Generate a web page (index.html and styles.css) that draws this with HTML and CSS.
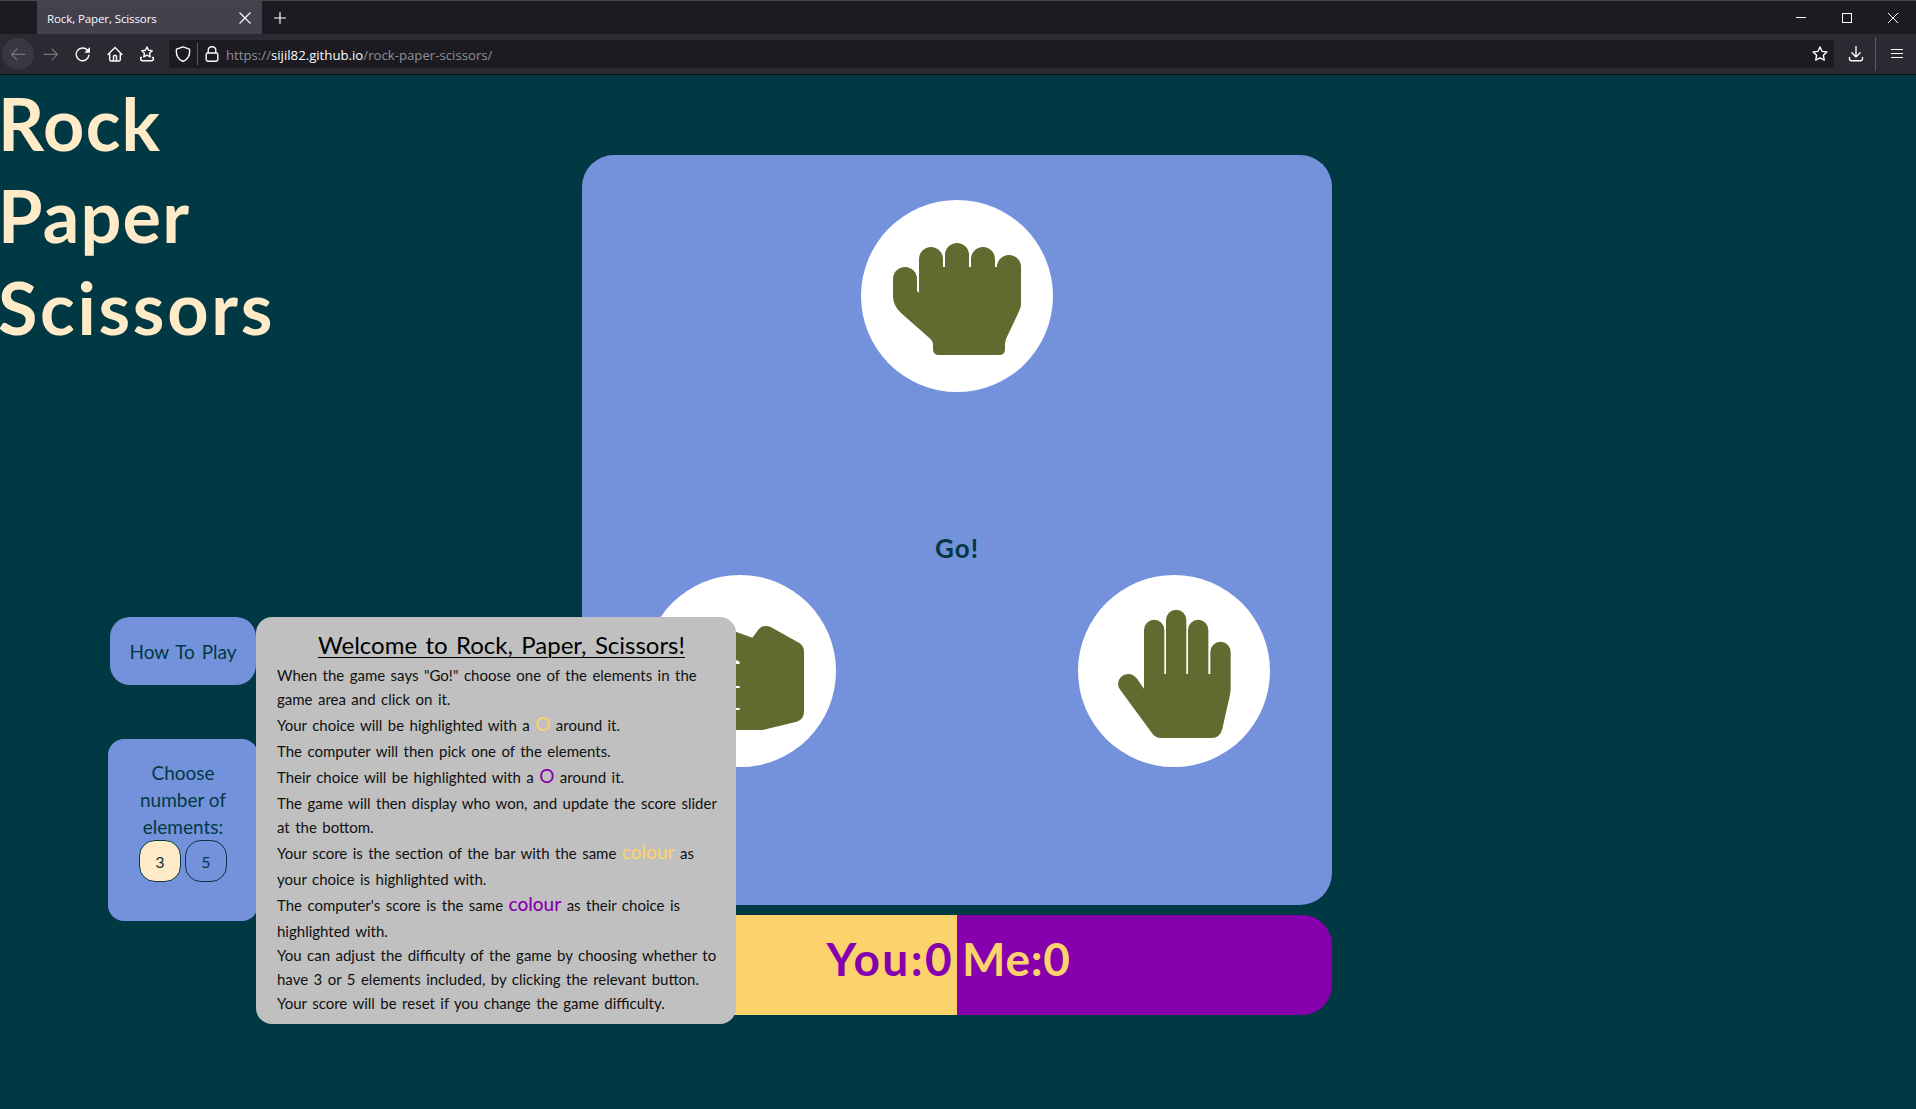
FILE: index.html
```html
<!DOCTYPE html>
<html lang="en">
<head>
<meta charset="utf-8">
<title>Rock, Paper, Scissors</title>
<link rel="stylesheet" href="styles.css">
</head>
<body>
<div class="tabbar">
  <div class="tab"><span class="tab-title">Rock, Paper, Scissors</span>
    <svg class="tab-close" width="14" height="14" viewBox="0 0 14 14"><path d="M1.5 1.5l11 11M12.5 1.5l-11 11"/></svg>
  </div>
  <svg class="new-tab" width="14" height="14" viewBox="0 0 14 14"><path d="M7 1.3v11.4M1 7h12"/></svg>
  <div class="window-buttons">
    <svg width="12" height="12" viewBox="0 0 12 12"><path d="M1 5.5h10"/></svg>
    <svg width="12" height="12" viewBox="0 0 12 12"><path d="M1.5 1.5h9v9h-9z"/></svg>
    <svg width="12" height="12" viewBox="0 0 12 12"><path d="M1 1l10 10M11 1L1 11"/></svg>
  </div>
</div>
<div class="toolbar">
  <span class="back"><svg class="icon" viewBox="0 0 16 16"><path d="M15 8.4H1.5M7 3L1.5 8.4 7 13.8"/></svg></span>
  <svg class="icon forward" viewBox="0 0 16 16"><path d="M1 8.4h13.5M9 3l5.500 5.400L9 13.800"/></svg>
  <svg class="icon reload" viewBox="0 0 16 16"><path d="M14 9.200A6.400 6.400 0 1 1 12.500 4.200"/><path class="solid" d="M15 1v5.700H9.300z"/></svg>
  <svg class="icon home" viewBox="0 0 16 16"><path d="M1 8.500L8 1.500l7 7M2.700 7.500v6q0 1.500 1.500 1.500h7.600q1.500 0 1.500-1.500v-6M6.500 15v-4.500q0-1 1-1h1q1 0 1 1V15"/></svg>
  <svg class="icon bookmarks" viewBox="0 0 16 16"><path d="M8 1l1.600 3.300 3.600.5-2.600 2.500.6 3.500L8 9.200l-3.200 1.600.6-3.500-2.600-2.500 3.600-.5zM2.500 11.500H1.700v1.500q0 1.800 1.800 1.800h9q1.800 0 1.800-1.800v-1.500h-.8"/></svg>
  <div class="urlbar">
    <svg class="icon shield" viewBox="0 0 16 16"><path d="M8 .8l6.500 2.400q.6 4.500-1.200 7.800T8 15.500Q4.500 14.300 2.700 11T1.500 3.200z"/></svg>
    <span class="divider"></span>
    <svg class="icon lock" viewBox="0 0 16 16"><path d="M4.200 7V4.500Q4.200.7 8 .7t3.800 3.800V7M3.800 7h8.400q1.600 0 1.600 1.600v5q0 1.600-1.600 1.600H3.800q-1.600 0-1.600-1.600v-5Q2.200 7 3.800 7z"/></svg>
    <span class="url">https://<b>sijil82.github.io</b>/rock-paper-scissors/</span>
    <svg class="icon star" viewBox="0 0 16 16"><path d="M8 1l2.100 4.400 4.800.6-3.500 3.300.9 4.800L8 11.800l-4.300 2.300.9-4.800L1.100 6l4.800-.6z"/></svg>
  </div>
  <svg class="icon download" viewBox="0 0 16 16"><path d="M8 .5V11M3.800 6.800L8 11l4.200-4.200M1.500 11.500V13q0 1.700 1.700 1.700h9.600q1.700 0 1.700-1.700v-1.500"/></svg>
  <span class="menu-wrap"><svg width="12" height="12" viewBox="0 0 12 12"><path d="M0 1.500h12M0 5.500h12M0 9.500h12"/></svg></span>
</div>
<main>
  <aside>
    <h1><span>Rock</span><span>Paper</span><span class="wide">Scissors</span></h1>
    <div class="how-to">
      <button class="how-button">How To Play</button>
      <section class="instructions">
        <h2>Welcome to Rock, Paper, Scissors!</h2>
        <p>When the game says "Go!" choose one of the elements in the<br>game area and click on it.</p>
        <p class="marked">Your choice will be highlighted with a <em class="you">O</em> around it.</p>
        <p>The computer will then pick one of the elements.</p>
        <p class="marked">Their choice will be highlighted with a <em class="me">O</em> around it.</p>
        <p>The game will then display who won, and update the score slider<br>at the bottom.</p>
        <p class="marked">Your score is the section of the bar with the same <em class="you word">colour</em> as</p>
        <p>your choice is highlighted with.</p>
        <p class="marked">The computer's score is the same <em class="me word">colour</em> as their choice is</p>
        <p>highlighted with.</p>
        <p>You can adjust the difficulty of the game by choosing whether to<br>have 3 or 5 elements included, by clicking the relevant button.<br>Your score will be reset if you change the game difficulty.</p>
      </section>
    </div>
    <div class="difficulty">
      <div>Choose<br>number of<br>elements:</div>
      <div class="options"><button class="selected">3</button><button>5</button></div>
    </div>
  </aside>
  <div class="game">
    <div class="board">
      <button class="choice rock"><svg viewBox="33 30 576 576"><path d="M129 267a36 36 0 0 1 72 0v36l6 5V207a36 36 0 0 1 72 0v24h6v-36a36 36 0 0 1 72 0v36h6v-24a36 36 0 0 1 72 0v24h6a36 36 0 0 1 72 0v111q0 10-4 18l-40 85q-4 8-4 20v12q0 18-18 18H267q-18 0-18-18v-12q0-12-10-20l-86-76q-24-24-24-49z"/></svg></button>
      <div class="message">Go!</div>
      <button class="choice scissors"><svg viewBox="12 45 576 576"><path d="M337 233l19-25q14-16 36-7l86 48q14 9 14 26v180q0 23-22 30l-102 25H253q-27 0-27-30t27-30h46v-6h-71q-30 0-30-30t30-30h71v-6H139q-30 0-30-34t30-30l160-2v-7L152 233q-27-12-18-39t42-19z"/></svg></button>
      <button class="choice paper"><svg viewBox="24 45 576 576"><path d="M151 390q-7-8-7-18a30 30 0 0 1 30-30q16 0 26 13l22 31V210a30 30 0 0 1 61 0v132h5V180a30 30 0 0 1 61 0v162h5V210a30 30 0 0 1 61 0v132h6v-66a30 30 0 0 1 61 0v108q0 10-2 20l-23 102q-6 27-33 28H272q-14 0-24-12z"/></svg></button>
    </div>
    <div class="score">
      <div class="score-you">You:0</div>
      <div class="score-me">Me:0</div>
    </div>
  </div>
</main>
</body>
</html>
```
FILE: styles.css
```css
* { box-sizing: border-box; }
body { margin: 0; height: 1109px; overflow: hidden; background: #003943; color: #003943; font-family: Lato, "Liberation Sans", sans-serif; }
button { padding: 0; border: 0; font: inherit; color: inherit; }
svg { display: block; flex: none; fill: none; stroke: #fbfbfe; }

.tabbar { height: 34px; display: flex; align-items: center; background: #1c1b22; border-top: 1px solid #484848; padding-left: 37px; font-family: "Open Sans", "Noto Sans", sans-serif; }
.tab { width: 225px; height: 33px; display: flex; align-items: center; justify-content: space-between; padding: 1px 10px 0; background: #42414d; color: #fbfbfe; font-size: 11.500px; }
.tab-title { letter-spacing: -.1px; }
.new-tab { margin-left: 11px; stroke-width: 1.2; }
.tab-close { stroke-width: 1.2; }
.window-buttons { display: flex; gap: 34px; margin-left: auto; margin-right: 17px; }
.window-buttons svg { shape-rendering: crispEdges; }

.toolbar { height: 41px; display: flex; align-items: center; background: #2b2a33; border-bottom: 1px solid #0c0c0d; }
.icon { width: 16px; height: 16px; stroke-width: 1.4; stroke-linejoin: round; stroke-linecap: round; }
.back { width: 32px; height: 32px; margin-left: 2px; display: grid; place-items: center; border-radius: 50%; background: #393842; }
.back .icon, .forward { stroke: #77767d; stroke-width: 1.1; }
.forward { margin-left: 9px; }
.reload { margin-left: 16px; }
.reload .solid { fill: #fbfbfe; stroke: none; }
.home { margin-left: 16px; }
.bookmarks { margin-left: 16px; }
.urlbar { flex: 1; height: 28px; margin-left: 14px; padding: 0 6px; display: flex; align-items: center; background: #1c1b22; }
.divider { width: 1px; height: 22px; margin: 0 6px; background: #5b5b66; }
.url { margin-left: 6px; padding-top: 2px; flex: 1; color: #8f8f96; font: 13.200px "Open Sans", "Noto Sans", sans-serif; }
.url b { font-weight: 400; color: #fbfbfe; }
.download { margin-left: 14px; }
.menu-wrap { height: 34px; display: flex; align-items: center; margin-left: 11px; padding: 0 13px 0 15px; border-left: 1px solid #5b5b66; }

main { display: flex; height: 1034px; }
aside { width: 582px; flex: none; }
h1 { height: 542px; margin: 0 0 0 -2px; padding-top: 2px; color: #ffebc8; font-size: 72px; line-height: 92px; font-weight: 700; letter-spacing: 1.200px; }
h1 span { display: block; }
h1 .wide { letter-spacing: 2.700px; }
.how-to { position: relative; width: 146px; height: 68px; margin-left: 110px; }
.how-button { width: 146px; height: 68px; border-radius: 20px; background: #7492dc; font-size: 19px; word-spacing: 2px; }
.instructions { position: absolute; z-index: 2; left: 146px; top: 0; width: 480px; height: 407px; padding: 10px 0 0 21px; border-radius: 16px; background: #c0c0c0; color: #101010; font-size: 15px; line-height: 24px; word-spacing: 1.600px; white-space: nowrap; }
.instructions h2 { width: 370px; height: 36px; margin: 0 0 0 41px; color: #000; font-size: 24px; line-height: 36px; font-weight: 400; word-spacing: 2.200px; text-decoration: underline; text-decoration-thickness: 1px; text-underline-offset: 3px; }
.instructions p { margin: 0; }
.instructions .marked { line-height: 28px; }
.instructions em { font-style: normal; font-size: 19px; line-height: 20px; }
.instructions .you { color: #fbd26c; }
.instructions .me { color: #8700ad; }
.instructions .word { font-weight: 500; }
.difficulty { width: 150px; height: 182px; margin: 54px 0 0 108px; padding: 20px 0 0; border-radius: 16px; background: #7492dc; font-size: 19px; line-height: 27px; text-align: center; }
.options { display: flex; justify-content: center; gap: 4px; }
.options button { width: 42px; height: 42px; border: 1px solid #003943; border-radius: 16px; background: none; font-size: 16px; }
.options .selected { background: #ffebc8; }

.game { width: 750px; padding-top: 80px; }
.board { height: 750px; display: grid; grid-template: 294px 126px 330px / 1fr 1fr; border-radius: 32px; background: #7492dc; }
.choice { width: 192px; height: 192px; border-radius: 50%; background: #fff; }
.choice svg { width: 192px; height: 192px; fill: #5f6b2f; stroke: none; }
.rock { grid-column: 1 / 3; margin: 45px auto 0; }
.message { grid-column: 1 / 3; align-self: end; text-align: center; font-size: 26px; line-height: 32px; font-weight: 700; letter-spacing: 1px; margin-bottom: 11px; }
.scissors { margin-left: 62px; }
.paper { margin-left: 121px; }
.score { display: grid; grid-template-columns: 1fr 1fr; height: 100px; margin-top: 10px; border-radius: 30px; overflow: hidden; font-size: 46px; line-height: 88px; font-weight: 700; }
.score-you { background: #fbd26c; color: #8700ad; text-align: right; padding-right: 3px; letter-spacing: 2.400px; }
.score-me { background: #8700ad; color: #fbd26c; padding-left: 5px; letter-spacing: .700px; }
```
